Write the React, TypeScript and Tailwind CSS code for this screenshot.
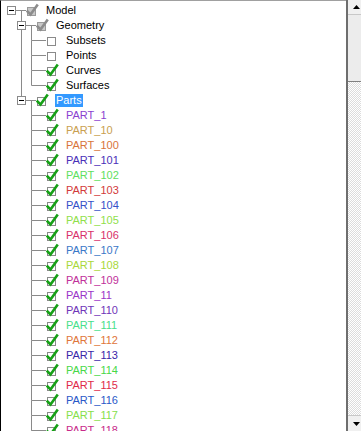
import React from "react";

type Check = "gray" | "off" | "on";

type TreeNode = {
  label: string;
  level: number;
  check: Check;
  open?: boolean;
  next?: boolean;
  guides: number[];
  color?: string;
  selected?: boolean;
};

const partColors: [string, string][] = [
  ["PART_1", "#8a3fd0"],
  ["PART_10", "#c9a050"],
  ["PART_100", "#d8743a"],
  ["PART_101", "#4a2fb8"],
  ["PART_102", "#5ee05e"],
  ["PART_103", "#d23a3a"],
  ["PART_104", "#3550c8"],
  ["PART_105", "#8fe04a"],
  ["PART_106", "#d8306a"],
  ["PART_107", "#3a78c8"],
  ["PART_108", "#a8d83a"],
  ["PART_109", "#c0309a"],
  ["PART_11", "#9a35c8"],
  ["PART_110", "#7035b8"],
  ["PART_111", "#48e08a"],
  ["PART_112", "#e0763a"],
  ["PART_113", "#3a26a8"],
  ["PART_114", "#48d848"],
  ["PART_115", "#e02a48"],
  ["PART_116", "#2a58c8"],
  ["PART_117", "#86e04a"],
  ["PART_118", "#c82a8a"],
];

const nodes: TreeNode[] = [
  { label: "Model", level: 0, check: "gray", open: true, guides: [] },
  { label: "Geometry", level: 1, check: "gray", open: true, next: true, guides: [] },
  { label: "Subsets", level: 2, check: "off", next: true, guides: [1] },
  { label: "Points", level: 2, check: "off", next: true, guides: [1] },
  { label: "Curves", level: 2, check: "on", next: true, guides: [1] },
  { label: "Surfaces", level: 2, check: "on", guides: [1] },
  { label: "Parts", level: 1, check: "on", open: true, guides: [], selected: true },
  ...partColors.map(([label, color]) => ({
    label,
    level: 2,
    check: "on" as Check,
    next: true,
    guides: [],
    color,
  })),
];

const LINE = "#8a8a8a";

function Lines({ node }: { node: TreeNode }) {
  const L = node.level;
  const w = 25 + 10 * L;
  const x0 = 10 + 10 * L + 0.5;
  return (
    <svg width={w} height={15} className="shrink-0 block">
      {node.guides.map((g) => (
        <line key={g} x1={10 + 10 * g + 0.5} y1={0} x2={10 + 10 * g + 0.5} y2={15} stroke={LINE} />
      ))}
      {L > 0 && <line x1={x0} y1={0} x2={x0} y2={7.5} stroke={LINE} />}
      {node.next && <line x1={x0} y1={7.5} x2={x0} y2={15} stroke={LINE} />}
      <line x1={x0} y1={7.5} x2={w} y2={7.5} stroke={LINE} />
      {node.open && <line x1={x0 + 10} y1={7.5} x2={x0 + 10} y2={15} stroke={LINE} />}
      {node.open && (
        <g>
          <rect x={10 * L + 6.5} y={3.5} width={8} height={8} fill="#fff" stroke="#8a8a8a" />
          <line x1={10 * L + 8} y1={7.5} x2={10 * L + 13} y2={7.5} stroke="#000" />
        </g>
      )}
    </svg>
  );
}

function CheckBox({ check }: { check: Check }) {
  const box = check === "gray" ? "#c8c8c8" : "#fff";
  const border = check === "gray" ? "#9a9a9a" : "#8a8a8a";
  return (
    <svg width={13} height={15} className="shrink-0 block">
      <rect x={1.5} y={4.5} width={8} height={8} fill={box} stroke={border} />
      {check !== "off" && (
        <path
          d="M1.5 8.5 L4.5 11.5 L11 2.5"
          fill="none"
          stroke={check === "gray" ? "#8c8c8c" : "#16a016"}
          strokeWidth={2.6}
          strokeLinecap="square"
        />
      )}
    </svg>
  );
}

function Row({ node }: { node: TreeNode }) {
  return (
    <div className="flex items-center h-[15px]">
      <Lines node={node} />
      <CheckBox check={node.check} />
      <span
        className={
          "ml-[6px] px-[1px] leading-[13px] whitespace-nowrap " +
          (node.selected ? "bg-[#3399ff] text-white" : "")
        }
        style={node.color ? { color: node.color } : undefined}
      >
        {node.label}
      </span>
    </div>
  );
}

function ScrollBar() {
  return (
    <div className="w-[15px] shrink-0 flex flex-col border-l-2 border-[#6e6e6e] bg-[repeating-conic-gradient(#dcdcdc_0_25%,#ffffff_0_50%)] bg-[length:2px_2px]">
      <div className="h-[15px] bg-[#f0f0f0] flex items-center justify-center border-b border-[#c8c8c8]">
        <svg width={7} height={4} className="block ml-[4px]">
          <path d="M3.5 0 L7 4 L0 4 Z" fill="#000" />
        </svg>
      </div>
      <div className="h-[67px] bg-[#ececec] border-b border-[#808080]" />
      <div className="flex-1" />
      <div className="h-[16px] bg-[#f0f0f0] flex items-center justify-center border-t border-[#c8c8c8]">
        <svg width={7} height={4} className="block ml-[4px]">
          <path d="M0 0 L7 0 L3.5 4 Z" fill="#000" />
        </svg>
      </div>
    </div>
  );
}

export default function App() {
  return (
    <div className="w-[361px] h-[431px] overflow-hidden bg-white flex font-['Liberation_Sans',Arial,sans-serif] text-[11px] text-black">
      <div className="flex-1 border-l border-black border-t border-t-[#a0a0a0] pt-[2px] overflow-hidden">
        {nodes.map((n) => (
          <Row key={n.label} node={n} />
        ))}
      </div>
      <ScrollBar />
    </div>
  );
}
